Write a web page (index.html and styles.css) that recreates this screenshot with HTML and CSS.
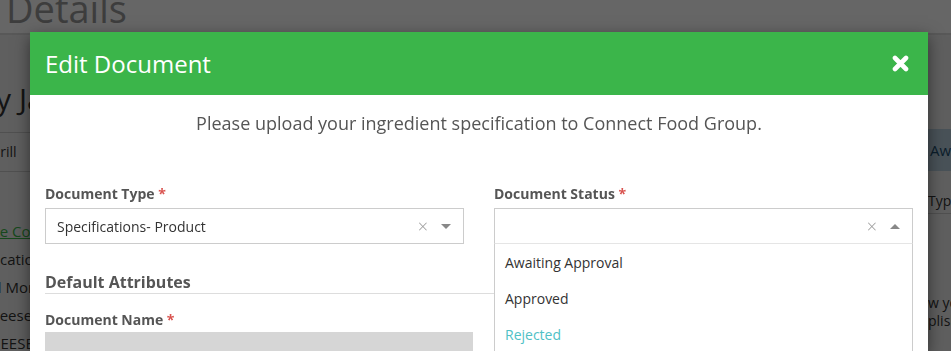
FILE: index.html
```html
<!DOCTYPE html>
<html lang="en">
<head>
    <meta charset="UTF-8">
    <title>Edit Document</title>
    <link rel="stylesheet" href="styles.css">
</head>
<body>
    <!-- pagina atras do modal -->
    <div class="page">
        <div class="page-header">
            <h1>Details</h1>
        </div>
        <div class="page-main">
            <div class="page-left">
                <h2>Monterey Jack</h2>
                <div class="tab-row">Grill</div>
                <a class="doc-link" href="#">Cheese Connect</a>
                <p class="line-cert">Certification</p>
                <p class="line-full">Full Monterey</p>
                <p class="line-cheese">Cheese, Sliced</p>
                <p class="line-caps">CHEESE CO</p>
            </div>
            <div class="page-right">
                <div class="badge">Awaiting</div>
                <div class="table-head">Type</div>
                <p>w your</p>
                <p>plished</p>
            </div>
        </div>
    </div>

    <div class="backdrop"></div>

    <div class="modal">
        <div class="modal-header">
            <h3 class="modal-title">Edit Document</h3>
            <svg class="modal-close" width="17" height="17" viewBox="0 0 17 17">
                <path d="M3 3 L14 14 M14 3 L3 14" stroke="#fff" stroke-width="4.6" stroke-linecap="round"/>
            </svg>
        </div>
        <div class="modal-body">
            <p class="intro">Please upload your ingredient specification to Connect Food Group.</p>

            <div class="row">
                <div class="field">
                    <label>Document Type <span class="req">*</span></label>
                    <div class="select">
                        <span class="select-value">Specifications- Product</span>
                        <span class="select-clear">&times;</span>
                        <span class="caret"></span>
                    </div>
                </div>
                <div class="field">
                    <label>Document Status <span class="req">*</span></label>
                    <div class="select open">
                        <span class="select-value"></span>
                        <span class="select-clear">&times;</span>
                        <span class="caret up"></span>
                        <ul class="select-menu">
                            <li>Awaiting Approval</li>
                            <li>Approved</li>
                            <li class="active">Rejected</li>
                        </ul>
                    </div>
                </div>
            </div>

            <h4 class="section-title">Default Attributes</h4>

            <div class="field">
                <label>Document Name <span class="req">*</span></label>
                <div class="input-disabled"></div>
            </div>
        </div>
    </div>
</body>
</html>
```

FILE: styles.css
```css
body {
    font-family: "Open Sans", Arial, sans-serif;
    margin: 0;
    padding: 0;
    height: 351px;
    overflow: hidden;
    background-color: #eee;
    color: #333;
}

/* pagina de fundo */
.page-header {
    height: 33px;
    background-color: #fff;
    border-bottom: 2px solid #ddd;
    overflow: hidden;
}

.page-header h1 {
    margin: -17px 0 0 6px;
    font-size: 38px;
    font-weight: 400;
    line-height: 50px;
    color: #999;
}

.page-main {
    display: flex;
    justify-content: space-between;
}

.page-left {
    width: 300px;
    margin-left: -98px;
    white-space: nowrap;
}

.page-left h2 {
    margin: 44px 0 0 -26px;
    font-size: 30px;
    font-weight: 400;
    line-height: 40px;
}

.tab-row {
    margin-top: 13px;
    padding: 9px 0 9px 88px;
    border-top: 1px solid #c8c8c8;
    border-bottom: 1px solid #c8c8c8;
    font-size: 14px;
    line-height: 20px;
}

.doc-link {
    display: block;
    margin-top: 49px;
    padding-left: 55px;
    font-size: 15px;
    color: #3bb54a;
    text-decoration: underline;
}

.page-left p {
    margin: 8px 0 0;
    font-size: 15px;
    line-height: 20px;
}

.page-left .line-cert {
    padding-left: 56px;
}

.page-left .line-full {
    padding-left: 75px;
}

.page-left .line-cheese {
    padding-left: 79px;
}

.page-left .line-caps {
    padding-left: 78px;
}

.page-right {
    width: 23px;
    white-space: nowrap;
    overflow: hidden;
}

.badge {
    margin-top: 94px;
    height: 42px;
    padding-left: 2px;
    background-color: #b6cddd;
    color: #1d4d6e;
    font-size: 15px;
    line-height: 42px;
}

.table-head {
    margin-top: 20px;
    padding-bottom: 2px;
    border-bottom: 1px solid #c8c8c8;
    font-size: 14px;
    line-height: 20px;
}

.page-right p {
    margin: 0;
    font-size: 14px;
    line-height: 18px;
}

.page-right p:first-of-type {
    margin-top: 80px;
}

.backdrop {
    position: fixed;
    top: 0;
    left: 0;
    right: 0;
    bottom: 0;
    background-color: rgba(0, 0, 0, 0.6);
}

/* modal */
.modal {
    position: absolute;
    top: 32px;
    left: 30px;
    width: 898px;
    height: 319px;
    overflow: hidden;
    background-color: #fff;
    box-shadow: 0 5px 15px rgba(0, 0, 0, 0.5);
}

.modal-header {
    height: 63px;
    padding: 0 19px 0 15px;
    background-color: #3bb54a;
    display: flex;
    align-items: center;
    justify-content: space-between;
}

.modal-title {
    margin: 0;
    font-size: 24px;
    font-weight: 400;
    color: #fff;
}

.modal-body {
    padding: 15px;
}

.intro {
    margin: 0 0 48px;
    text-align: center;
    font-size: 18px;
    line-height: 26px;
    color: #555;
}

.row {
    display: grid;
    grid-template-columns: 1fr 1fr;
    column-gap: 30px;
}

label {
    display: block;
    font-size: 14px;
    font-weight: 700;
    line-height: 20px;
    color: #555;
    margin-bottom: 4px;
}

.req {
    color: #d9534f;
}

.select {
    position: relative;
    height: 34px;
    border: 1px solid #ccc;
    display: flex;
    align-items: center;
    padding: 0 12px 0 11px;
    font-size: 14px;
    color: #333;
}

.select.open {
    border-bottom-color: #e5e5e5;
}

.select-value {
    flex: 1;
}

.select-clear {
    color: #999;
    font-size: 18px;
    line-height: 18px;
    margin-right: 13px;
    font-weight: 300;
}

.caret {
    width: 0;
    height: 0;
    border-left: 5px solid transparent;
    border-right: 5px solid transparent;
    border-top: 5px solid #888;
}

.caret.up {
    border-top: none;
    border-bottom: 5px solid #888;
}

.select-menu {
    position: absolute;
    top: 35px;
    left: -1px;
    right: -1px;
    margin: 0;
    padding: 0;
    list-style: none;
    background-color: #fff;
    border: 1px solid #ccc;
    border-top: none;
}

.select-menu li {
    height: 36px;
    line-height: 38px;
    padding: 0 11px 0 10px;
    font-size: 14px;
    color: #333;
}

.select-menu li.active {
    color: #4fc1c6;
}

.section-title {
    margin: 27px 0 16px;
    font-size: 16px;
    font-weight: 700;
    line-height: 22px;
    color: #555;
    border-bottom: 1px solid #ddd;
}

.field .input-disabled {
    width: 428px;
    height: 36px;
    background-color: #d6d6d6;
}

.section-title + .field label {
    margin-bottom: 2px;
}
```
